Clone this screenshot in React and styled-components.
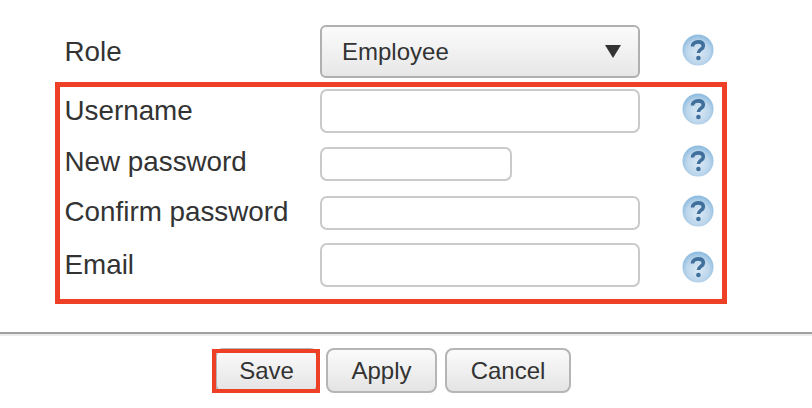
import React from 'react';
import styled, { createGlobalStyle } from 'styled-components';

const GlobalStyle = createGlobalStyle`
    html, body {
        margin: 0;
        padding: 0;
        background: #fff;
    }
    body {
        width: 812px;
        height: 408px;
        overflow: hidden;
        font-family: "Liberation Sans", Arial, sans-serif;
        color: #333;
    }
`

const Page = styled.div`
    display: flex;
    flex-direction: column;
    height: 408px;
    padding-top: 25px;
    box-sizing: border-box;
`

const Form = styled.div`
    display: flex;
    flex-direction: column;
    margin-left: 55px;
    width: 672px;
`

const Row = styled.div`
    display: grid;
    grid-template-columns: 255px 320px 1fr;
    align-items: center;
    height: ${props => props.$height}px;
    margin-top: ${props => props.$top || 0}px;
    padding-left: ${props => props.$inset}px;
`

const Label = styled.label`
    font-size: 27.8px;
    line-height: 30px;
    margin-left: -0.5px;
    margin-top: ${props => props.$shift || 0}px;
    white-space: nowrap;
`

const Highlight = styled.section`
    display: flex;
    flex-direction: column;
    margin-top: 4px;
    height: 222px;
    box-sizing: border-box;
    border: 5px solid #ee4026;
    padding-top: 2px;
`

const SelectBox = styled.div`
    display: flex;
    align-items: center;
    justify-content: space-between;
    box-sizing: border-box;
    width: 320px;
    height: 100%;
    padding: 0 17px 0 20px;
    border: 2px solid #b0b0b0;
    border-radius: 6px;
    background: linear-gradient(#fbfbfb, #e7e7e7);
    font-size: 24px;
`

const Arrow = styled.span`
    width: 0;
    height: 0;
    border-left: 8px solid transparent;
    border-right: 8px solid transparent;
    border-top: 13px solid #333;
`

const Input = styled.input`
    display: block;
    box-sizing: border-box;
    width: ${props => props.$width}px;
    height: 100%;
    padding: 0 8px;
    border: 2px solid #cacaca;
    border-radius: 7px;
    background: #fff;
    outline: none;
`

const HelpWrap = styled.span`
    display: flex;
    justify-self: start;
    margin-left: 42px;
    margin-top: ${props => props.$shift || 0}px;
`

const HelpSvg = styled.svg`
    display: block;
    filter: blur(0.5px);
`

const Divider = styled.hr`
    width: 100%;
    height: 2px;
    margin: 28px 0 0;
    border: 0;
    background: #a0a0a0;
    box-shadow: 0 2px 0 #ececec;
`

const Buttons = styled.div`
    display: flex;
    gap: 8px;
    margin-top: 14px;
    padding-left: 215px;
`

const Button = styled.button`
    position: relative;
    box-sizing: border-box;
    width: ${props => props.$width}px;
    height: 45px;
    padding: 0;
    border: 2px solid #b5b5b5;
    border-radius: 8px;
    background: linear-gradient(#fbfbfb, #e4e4e4);
    color: #333;
    font-family: inherit;
    font-size: 24px;
`

const Marker = styled.span`
    position: absolute;
    top: -1px;
    bottom: -2px;
    left: -5px;
    right: -4px;
    border: 4.5px solid #ee4026;
`

const HelpIcon = () => (
    <HelpSvg width="32" height="32" viewBox="0 0 32 32" aria-hidden="true">
        <defs>
            <radialGradient id="helpFill" cx="50%" cy="58%" r="56%">
                <stop offset="0%" stopColor="#dbe9f5" />
                <stop offset="65%" stopColor="#bcd6ec" />
                <stop offset="100%" stopColor="#8dbbdf" />
            </radialGradient>
        </defs>
        <circle cx="16" cy="16" r="15.5" fill="url(#helpFill)" />
        <path d="M10.5 12.5c0-3 2.4-4.6 5.6-4.6 3.2 0 5.2 1.6 5.2 4 0 3.4-4.9 3.6-4.9 7" fill="none" stroke="#3f6f9a" strokeWidth="3.6" />
        <circle cx="16.4" cy="24" r="2.3" fill="#3f6f9a" />
    </HelpSvg>
);

const App = () => {
    return (
        <Page>
            <GlobalStyle />
            <Form>
                <Row $height={53} $inset={10}>
                    <Label>Role</Label>
                    <SelectBox>Employee<Arrow /></SelectBox>
                    <HelpWrap $shift={-3}><HelpIcon /></HelpWrap>
                </Row>
                <Highlight>
                    <Row $height={44} $inset={5}>
                        <Label>Username</Label>
                        <Input $width={320} />
                        <HelpWrap $shift={-4}><HelpIcon /></HelpWrap>
                    </Row>
                    <Row $height={34} $top={14} $inset={5}>
                        <Label $shift={-4}>New password</Label>
                        <Input $width={192} />
                        <HelpWrap $shift={-6}><HelpIcon /></HelpWrap>
                    </Row>
                    <Row $height={34} $top={15} $inset={5}>
                        <Label $shift={-2}>Confirm password</Label>
                        <Input $width={320} />
                        <HelpWrap $shift={-4}><HelpIcon /></HelpWrap>
                    </Row>
                    <Row $height={44} $top={13} $inset={5}>
                        <Label>Email</Label>
                        <Input $width={320} />
                        <HelpWrap $shift={4}><HelpIcon /></HelpWrap>
                    </Row>
                </Highlight>
            </Form>
            <Divider />
            <Buttons>
                <Button $width={103}>Save<Marker /></Button>
                <Button $width={111}>Apply</Button>
                <Button $width={126}>Cancel</Button>
            </Buttons>
        </Page>
    );
};

export default App;
